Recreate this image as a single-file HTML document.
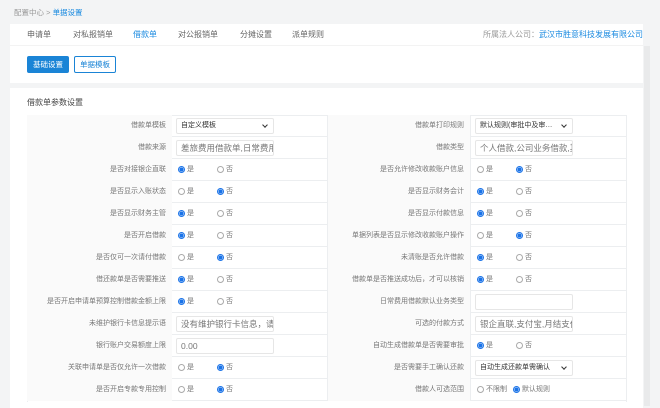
<!DOCTYPE html>
<html><head><meta charset="utf-8"><style>
*{margin:0;padding:0;box-sizing:border-box}
body{width:660px;height:402px;overflow:hidden;background:#f3f4f5;font-family:"Liberation Sans","Noto Sans CJK SC",sans-serif;font-size:7.5px;color:#555;position:relative}
.a{position:absolute;white-space:nowrap}
.blue{color:#1a8ae0}
.panel{position:absolute;background:#fff}
.row{position:absolute;left:27px;width:600px;height:22px;border-bottom:1px solid #eceef0}
.c{position:absolute;top:0;height:22px;line-height:21px}
.lab{background:#fafafa;text-align:right;padding-right:6px;font-size:7px;color:#777}
.l1{left:0;width:145px}.v1{left:145px;width:155px}.l2{left:300px;width:143px}.v2{left:443px;width:157px}
.inp{position:absolute;top:3px;left:4px;width:98px;height:16px;border:1px solid #e6e6e6;border-radius:2px;font-size:8.5px;line-height:14px;padding-left:4px;color:#777;background:#fff;overflow:hidden;white-space:nowrap}
.sel{font-size:7px;color:#333;padding-right:14px;text-overflow:ellipsis}
.sel:after{content:"";position:absolute;right:6px;top:4px;width:3px;height:3px;border-right:1.3px solid #333;border-bottom:1.3px solid #333;transform:rotate(45deg);background:#fff}
.r{position:absolute;top:7px;width:7px;height:7px;border-radius:50%;border:1px solid #aaa;background:#fff}
.r.on{border:1px solid #1a73e8;background:radial-gradient(circle,#1a73e8 0 2px,#fff 2.3px)}
.t{position:absolute;top:0;line-height:21px;font-size:7px;color:#777}
.tab{font-size:8px;color:#666}
</style></head><body>
<div class="a" style="left:14px;top:7px;color:#999">配置中心 &gt; <span class="blue">单据设置</span></div>
<div class="panel" style="left:10px;top:24px;width:633px;height:59px"></div>
<div class="a" style="left:10px;top:45px;width:633px;height:1px;background:#f3f3f3"></div>
<div class="a tab" style="left:27px;top:29px">申请单</div>
<div class="a tab" style="left:73px;top:29px">对私报销单</div>
<div class="a blue" style="left:133px;top:29px;font-size:8px">借款单</div>
<div class="a tab" style="left:178px;top:29px">对公报销单</div>
<div class="a tab" style="left:240px;top:29px">分摊设置</div>
<div class="a tab" style="left:292px;top:29px">派单规则</div>
<div class="a" style="left:483px;top:29px;font-size:8px;color:#999">所属法人公司：<span class="blue">武汉市胜意科技发展有限公司</span></div>
<div class="a" style="left:27px;top:56px;width:42px;height:17px;background:#1a84d6;color:#fff;border-radius:2px;text-align:center;line-height:17px;font-size:7.5px">基础设置</div>
<div class="a" style="left:74px;top:56px;width:42px;height:17px;border:1px solid #1a84d6;color:#1a84d6;border-radius:2px;text-align:center;line-height:15px;font-size:7.5px">单据模板</div>
<div class="panel" style="left:10px;top:88px;width:633px;height:320px"></div>
<div class="a" style="left:644px;top:46px;width:6px;height:360px;background:#e9eaeb"></div>
<div class="a" style="left:27px;top:97px;font-size:8px;color:#444">借款单参数设置</div>
<div class="a" style="left:27px;top:115px;width:600px;height:287px;border:1px solid #eceef0;border-bottom:none"></div>
<div id="t"></div>
<script>
var rows=[
["借款单模板",{s:"自定义模板"},"借款单打印规则",{s:"默认规则(审批中及审批完成均"}],
["借款来源",{i:"差旅费用借款单,日常费用借"},"借款类型",{i:"个人借款,公司业务借款,其它"}],
["是否对接银企直联",1,"是否允许修改收款账户信息",0],
["是否显示入账状态",0,"是否显示财务会计",1],
["是否显示财务主管",1,"是否显示付款信息",1],
["是否开启借款",1,"单据列表是否显示修改收款账户操作",0],
["是否仅可一次请付借款",0,"未清账是否允许借款",1],
["借还款单是否需要推送",1,"借款单是否推送成功后，才可以核销",1],
["是否开启申请单预算控制借款金额上限",1,"日常费用借款默认业务类型",{i:""}],
["未维护银行卡信息提示语",{i:"没有维护银行卡信息，请先到"},"可选的付款方式",{i:"银企直联,支付宝,月结支付"}],
["银行账户交易额度上限",{i:"0.00"},"自动生成借款单是否需要审批",1],
["关联申请单是否仅允许一次借款",0,"是否需要手工确认还款",{s:"自动生成还款单需确认"}],
["是否开启专款专用控制",0,"借款人可选范围",2]];
function val(v){
 if(typeof v=="object"){return v.s!==undefined?'<div class="inp sel">'+v.s+'</div>':'<div class="inp">'+v.i+'</div>';}
 if(v==2)return '<span class="r" style="left:6px"></span><span class="t" style="left:15px">不限制</span><span class="r on" style="left:42px"></span><span class="t" style="left:51px">默认规则</span>';
 return '<span class="r'+(v?' on':'')+'" style="left:6px"></span><span class="t" style="left:15px">是</span><span class="r'+(v?'':' on')+'" style="left:45px"></span><span class="t" style="left:54px">否</span>';
}
var h='';rows.forEach(function(r,i){
 h+='<div class="row" style="top:'+(115+i*22)+'px"><div class="c lab l1">'+r[0]+'</div><div class="c v1">'+val(r[1])+'</div><div class="c lab l2" style="border-left:1px solid #eceef0">'+r[2]+'</div><div class="c v2" style="border-left:1px solid #eceef0">'+val(r[3])+'</div></div>';
});
document.getElementById('t').innerHTML=h;
</script>
</body></html>
